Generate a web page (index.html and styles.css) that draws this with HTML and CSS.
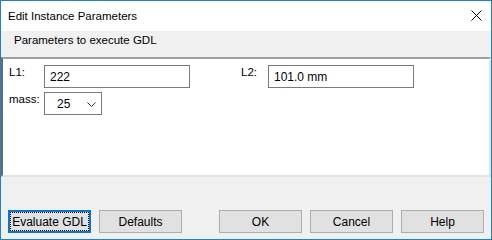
FILE: index.html
```html
<!DOCTYPE html>
<html lang="en">
<head>
    <meta charset="UTF-8">
    <title>Edit Instance Parameters</title>
    <link rel="stylesheet" href="styles.css">
</head>
<body>

<div class="window">
    <!-- title bar -->
    <div class="title-bar">
        <span class="title">Edit Instance Parameters</span>
        <span class="close-btn">
            <svg width="11" height="11" viewBox="0 0 11 11">
                <path d="M0.5 0.5 L10.5 10.5 M10.5 0.5 L0.5 10.5" stroke="#000" stroke-width="1" fill="none"/>
            </svg>
        </span>
    </div>

    <div class="section-header">Parameters to execute GDL</div>

    <!-- parameter list -->
    <div class="param-panel">
        <div class="param-row">
            <div class="param">
                <label class="param-label">L1:</label>
                <input type="text" class="param-input" value="222">
            </div>
            <div class="param param-second">
                <label class="param-label short">L2:</label>
                <input type="text" class="param-input" value="101.0 mm">
            </div>
        </div>
        <div class="param-row">
            <div class="param">
                <label class="param-label">mass:</label>
                <div class="param-select">
                    <span>25</span>
                    <svg width="9" height="5" viewBox="0 0 9 5">
                        <path d="M0.5 0.5 L4.5 4.5 L8.5 0.5" stroke="#333" stroke-width="1" fill="none"/>
                    </svg>
                </div>
            </div>
        </div>
    </div>

    <!-- buttons -->
    <div class="button-bar">
        <button class="btn btn-focus">Evaluate GDL</button>
        <button class="btn">Defaults</button>
        <div class="spacer"></div>
        <button class="btn">OK</button>
        <button class="btn">Cancel</button>
        <button class="btn">Help</button>
    </div>
</div>

</body>
</html>
```

FILE: styles.css
```css
body {
    margin: 0;
    padding: 0;
    font-family: "Liberation Sans", Arial, sans-serif;
    font-size: 11.5px;
    color: #000;
}

.window {
    width: 492px;
    height: 240px;
    box-sizing: border-box;
    border: 1px solid #1883d7;
    background-color: #f0f0f0;
    display: flex;
    flex-direction: column;
}

.title-bar {
    height: 30px;
    background-color: #fff;
    display: flex;
    align-items: center;
    padding-left: 7px;
    padding-right: 9px;
}

.title {
    flex-grow: 1;
    padding-bottom: 1px;
}

.close-btn {
    display: flex;
    padding-bottom: 1px;
}

.section-header {
    height: 26px;
    padding-left: 13px;
    padding-top: 3px;
    box-sizing: border-box;
}

.param-panel {
    height: 120px;
    box-sizing: border-box;
    background-color: #fff;
    border-top: 2px solid #a0a0a0;
    border-left: 2px solid #696969;
    border-right: 2px solid #e3e3e3;
    border-bottom: 2px solid #e3e3e3;
    padding: 6px 6px;
    display: flex;
    flex-direction: column;
    gap: 4px;
}

.param-row {
    display: flex;
}

.param {
    display: flex;
    align-items: flex-start;
}

.param-second {
    margin-left: 51px;
}

.param-label {
    width: 35px;
    padding-top: 1px;
}

.param-label.short {
    width: 27px;
}

.param-input {
    width: 146px;
    height: 23px;
    box-sizing: border-box;
    border: 1px solid #7a7a7a;
    padding: 0 5px;
    margin: 0;
    font-family: inherit;
    font-size: 12px;
    color: #000;
    outline: none;
}

.param-select {
    width: 58px;
    height: 23px;
    box-sizing: border-box;
    border: 1px solid #7a7a7a;
    background-color: #fff;
    display: flex;
    align-items: center;
    justify-content: space-between;
    padding: 0 5px 0 12px;
    font-size: 12px;
}

.param-select svg {
    margin-top: 1px;
}

.button-bar {
    flex-grow: 1;
    display: flex;
    align-items: flex-start;
    padding: 33px 7px 0 7px;
    gap: 8px;
}

.spacer {
    flex-grow: 1;
}

.btn {
    width: 83px;
    height: 23px;
    box-sizing: border-box;
    border: 1px solid #adadad;
    background-color: #e1e1e1;
    font-family: inherit;
    font-size: 12px;
    color: #000;
    padding: 0;
    margin: 0;
}

.btn-focus {
    border: 2px solid #0078d7;
    outline: 1px dotted #000;
    outline-offset: -3px;
}
```
